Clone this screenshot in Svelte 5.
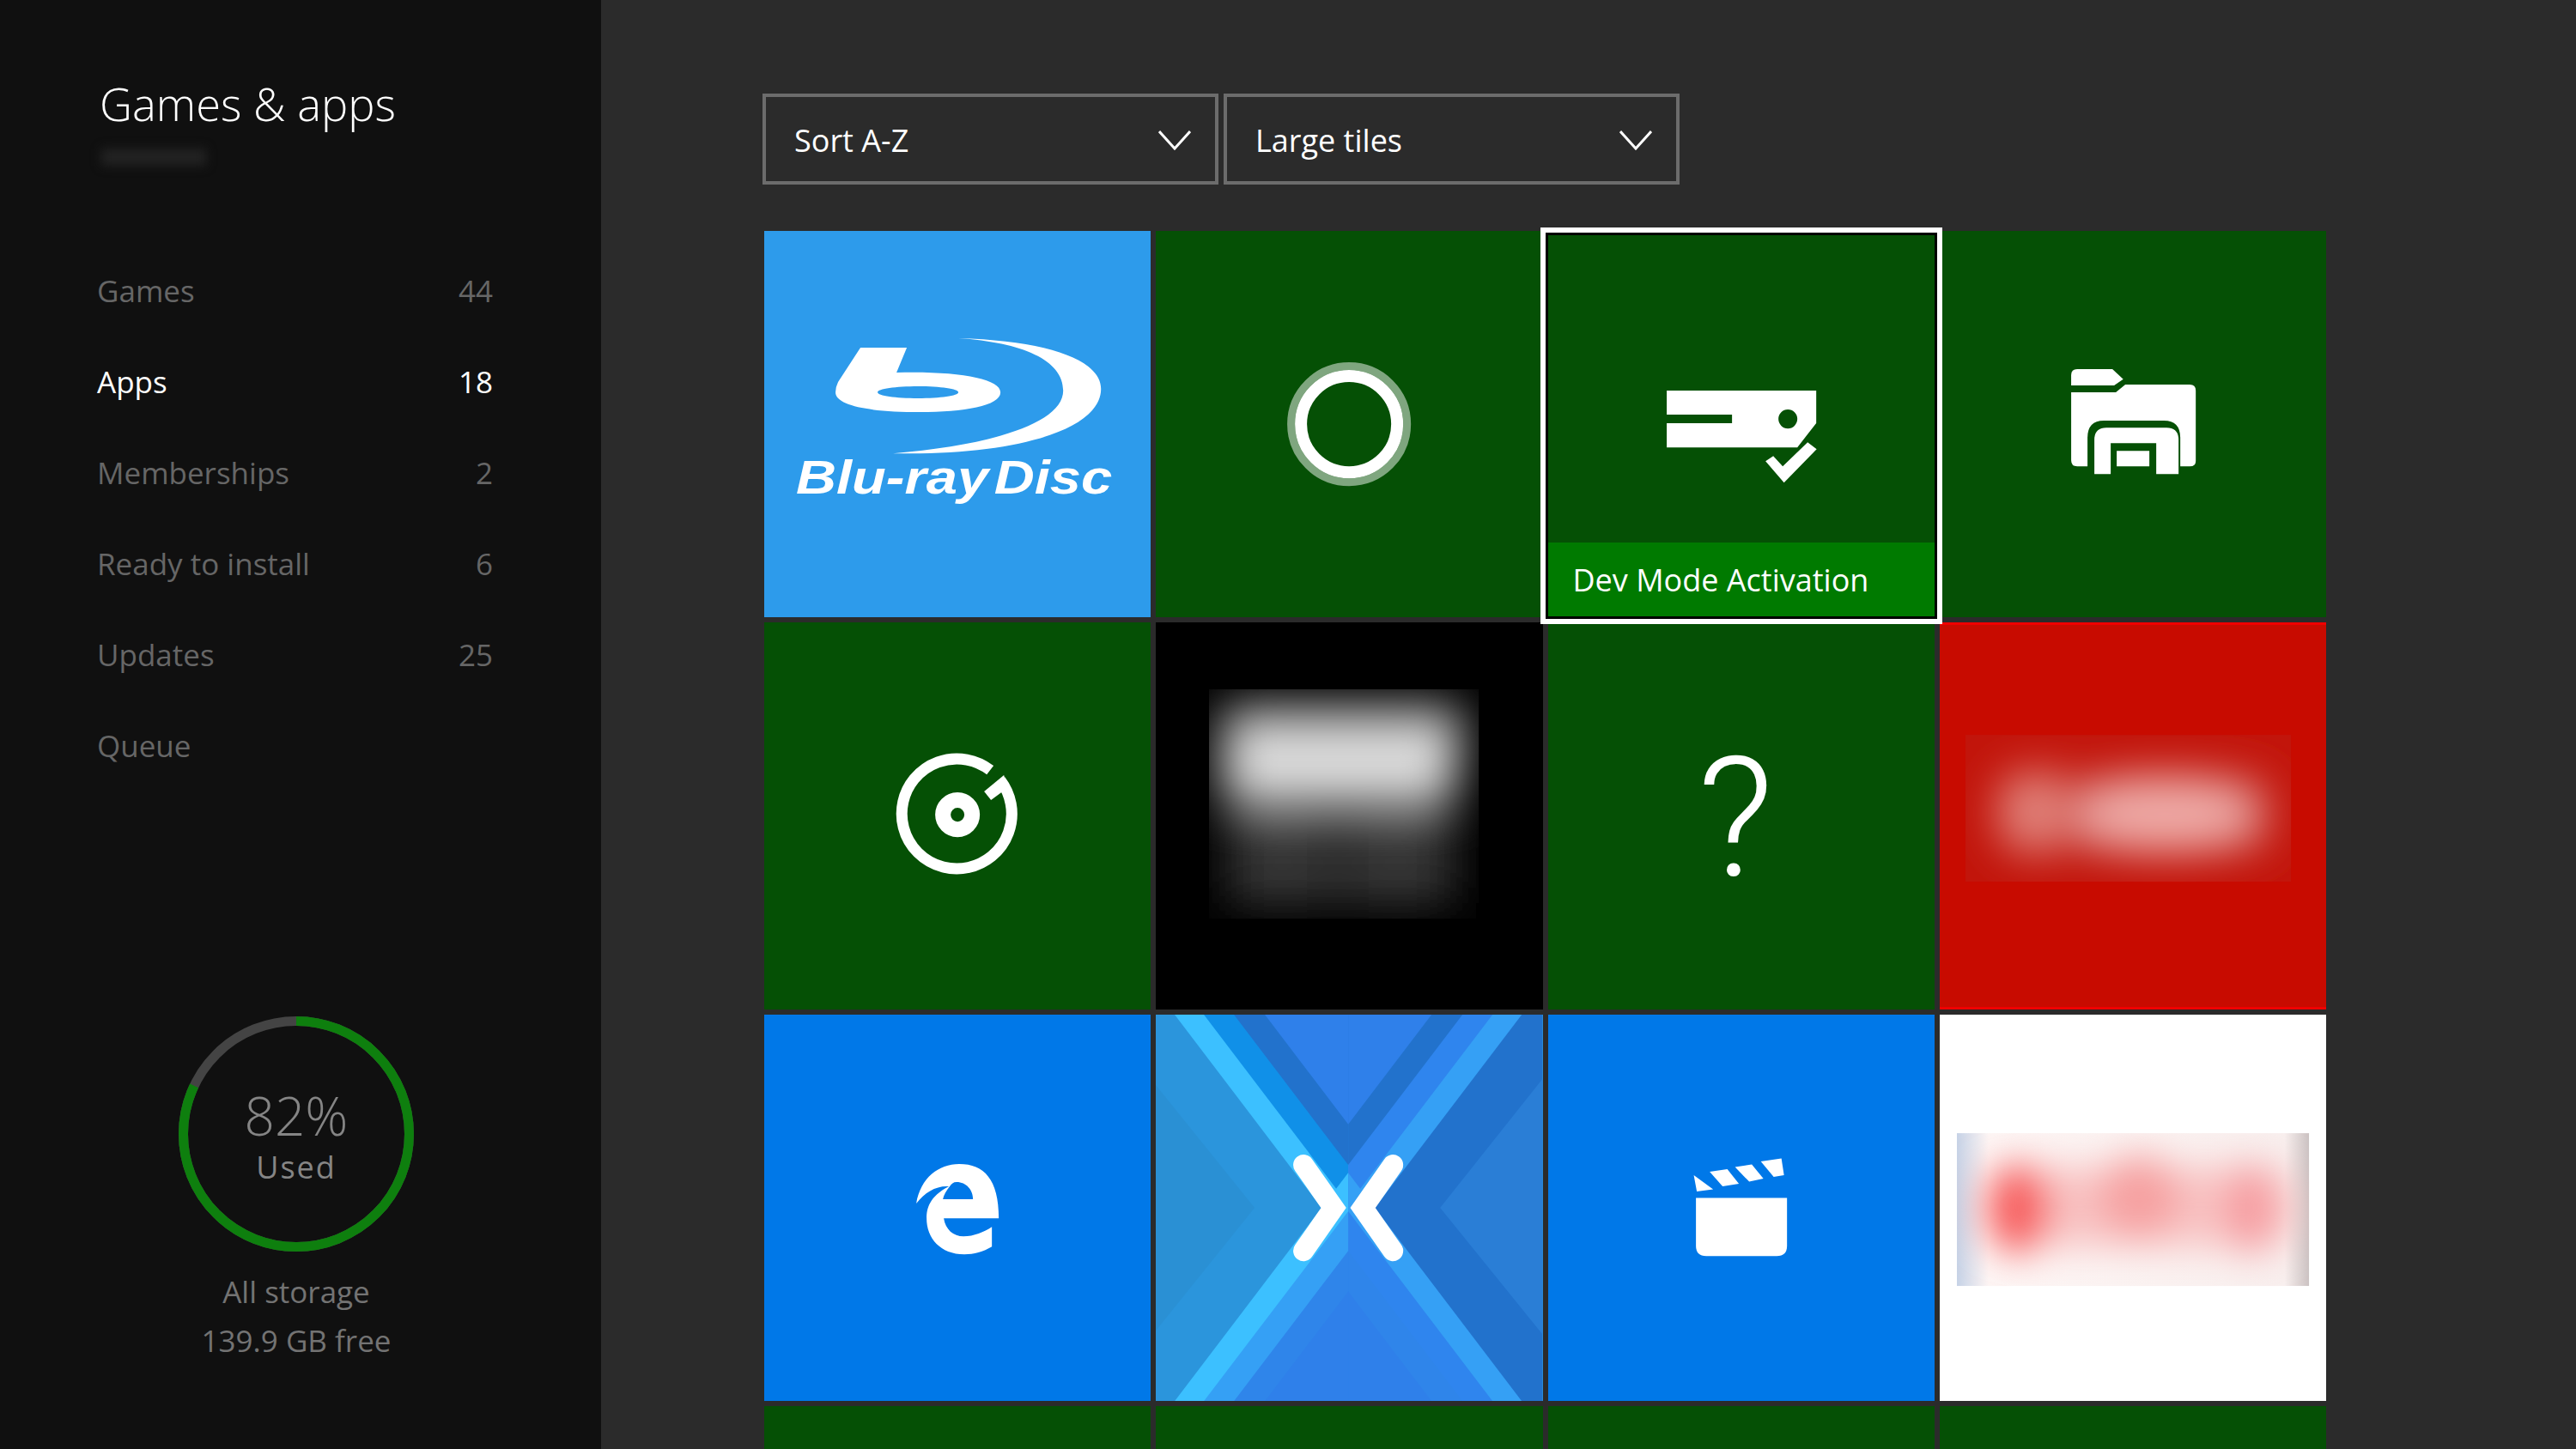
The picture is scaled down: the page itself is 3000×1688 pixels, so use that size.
<script lang="ts">
	const nav = [
		{ label: 'Games', count: 44 },
		{ label: 'Apps', count: 18, active: true },
		{ label: 'Memberships', count: 2 },
		{ label: 'Ready to install', count: 6 },
		{ label: 'Updates', count: 25 },
		{ label: 'Queue' }
	];

	// ring: 82% used, starting at 12 o'clock
	const r = 131.5;
	const circ = 2 * Math.PI * r;

	// nested V shapes of the Xamarin tile, outermost first
	const vShapes = [
		{ a: 22, l: '#3cc0ff', r: '#35a0f5', tl: '#3cc0ff', tr: '#35a0f5' },
		{ a: 56, l: '#1090e8', r: '#2f85ee', tl: '#35a0f5', tr: '#2f85ee' },
		{ a: 91, l: '#2272cc', r: '#2272cc', tl: '#2f85ea', tr: '#2f85ea' },
		{ a: 127, l: '#2f80ea', r: '#2f80ea', tl: '#2f80ea', tr: '#2f80ea' }
	];
	const apex = (a: number) => (224 - a) / 0.76;
</script>

<div class="screen">
	<aside class="side">
		<h1 class="title">Games &amp; apps</h1>
		<div class="gamertag"></div>

		<ul class="nav">
			{#each nav as item}
				<li class="nav-row" class:active={item.active}>
					<span>{item.label}</span>
					{#if item.count}<span>{item.count}</span>{/if}
				</li>
			{/each}
		</ul>

		<div class="storage">
			<div class="ring">
				<svg viewBox="0 0 274 274" width="274" height="274">
					<circle cx="137" cy="137" r={r} fill="none" stroke="#444444" stroke-width="11" />
					<circle
						cx="137"
						cy="137"
						r={r}
						fill="none"
						stroke="#0e7f0e"
						stroke-width="11"
						stroke-dasharray="{circ * 0.82} {circ}"
						transform="rotate(-90 137 137)"
					/>
				</svg>
				<div class="ring-text">
					<div class="pct">82%</div>
					<div class="used">Used</div>
				</div>
			</div>
			<div class="storage-text">All storage</div>
			<div class="storage-text">139.9 GB free</div>
		</div>
	</aside>

	<main class="main">
		<div class="filters">
			<div class="select">
				<span>Sort A-Z</span>
				<svg viewBox="0 0 38 24" width="38" height="24"><path d="M1 2 19 22 37 2" fill="none" stroke="#fff" stroke-width="3" /></svg>
			</div>
			<div class="select">
				<span>Large tiles</span>
				<svg viewBox="0 0 38 24" width="38" height="24"><path d="M1 2 19 22 37 2" fill="none" stroke="#fff" stroke-width="3" /></svg>
			</div>
		</div>

		<div class="grid">
			<!-- blu-ray -->
			<div class="tile bluray">
				<svg viewBox="0 0 450 450" class="art">
					<path fill="#fff" fill-rule="evenodd" d="M112 136H166L154 165C225 163 275 172 275 188C275 204 232 211 181 211C125 211 83 204 83 188Q83 182 86 176ZM179 181C153 181 132 184 132 188C132 192 153 195 179 195C205 195 226 192 226 188C226 184 205 181 179 181Z" />
					<path fill="#fff" d="M226 125C330 128 392 150 392 184C392 232 290 262 150 259C260 250 348 225 348 186C348 150 300 130 226 125Z" />
					<text x="37" y="306" class="bd-text" textLength="368" lengthAdjust="spacingAndGlyphs">Blu-ray Disc</text>
				</svg>
			</div>

			<!-- ring -->
			<div class="tile green">
				<svg viewBox="0 0 450 450" class="art">
					<circle cx="225" cy="225" r="67.5" fill="none" stroke="#7fa67f" stroke-width="9" />
					<circle cx="225" cy="225" r="56" fill="none" stroke="#fff" stroke-width="14" />
				</svg>
			</div>

			<!-- focused tile -->
			<div class="tile green focused">
				<svg viewBox="0 0 450 450" class="art">
					<path fill="#fff" fill-rule="evenodd" d="M138 186H312V224L290 252H138V224H214V214H138ZM279 208A11 11 0 1 0 279 230A11 11 0 1 0 279 208Z" />
					<path fill="#fff" d="M253 268 262 262 273 274 302 246 312.500 254 274.500 293Z" />
				</svg>
				<div class="tile-label">Dev Mode Activation</div>
				<div class="focus-ring"></div>
			</div>

			<!-- file explorer -->
			<div class="tile green">
				<svg viewBox="0 0 450 450" class="art">
					<path fill="#fff" d="M153 168Q153 161 160 161H201L213.600 172.700 203 180H153Z" />
					<path fill="#fff" d="M153 188H205L216 179H291Q298 179 298 186V268Q298 274 291 274H280V241Q280 221 261 221H191Q172 221 172 241V274H160Q153 274 153 267Z" />
					<path fill="#fff" fill-rule="evenodd" d="M180 283V243Q180 229 194 229H264Q278 229 278 243V283H252V247H199V283ZM206 256V274H244V256Z" />
				</svg>
			</div>

			<!-- groove -->
			<div class="tile green">
				<svg viewBox="0 0 450 450" class="art">
					<path d="M263 172A64 64 0 1 0 275 184" fill="none" stroke="#fff" stroke-width="13" />
					<path fill="#fff" d="M279 178 256 197 264 207 283 193Z" />
					<circle cx="225" cy="224" r="17" fill="none" stroke="#fff" stroke-width="18" />
				</svg>
			</div>

			<!-- redacted black tile -->
			<div class="tile black">
				<svg viewBox="0 0 450 450" class="art">
					<defs>
						<filter id="blur-a" x="-40%" y="-40%" width="180%" height="180%"><feGaussianBlur stdDeviation="27" /></filter>
						<clipPath id="clip-a"><rect x="62" y="78" width="314" height="267" /></clipPath>
					</defs>
					<g clip-path="url(#clip-a)">
						<g filter="url(#blur-a)">
							<rect x="76" y="84" width="285" height="60" fill="#3c3c3c" />
							<rect x="78" y="118" width="272" height="96" rx="20" fill="#dcdcdc" />
							<rect x="84" y="235" width="124" height="92" fill="#383838" />
							<rect x="216" y="235" width="130" height="92" fill="#383838" />
						</g>
					</g>
				</svg>
			</div>

			<!-- placeholder tile -->
			<div class="tile green">
				<svg viewBox="0 0 450 450" class="art">
					<text x="218" y="295" class="qmark" text-anchor="middle">?</text>
				</svg>
			</div>

			<!-- redacted red tile -->
			<div class="tile red">
				<svg viewBox="0 0 450 450" class="art">
					<defs>
						<filter id="blur-b" x="-40%" y="-40%" width="180%" height="180%"><feGaussianBlur stdDeviation="24" /></filter>
						<clipPath id="clip-b"><rect x="30" y="131" width="379" height="171" /></clipPath>
					</defs>
					<g clip-path="url(#clip-b)">
						<rect x="30" y="131" width="379" height="171" fill="#c2150b" />
						<g filter="url(#blur-b)">
							<rect x="66" y="172" width="326" height="100" rx="30" fill="#cc3b30" />
							<ellipse cx="108" cy="220" rx="40" ry="46" fill="#e08078" />
							<ellipse cx="262" cy="224" rx="104" ry="42" fill="#eea8a4" />
						</g>
					</g>
				</svg>
			</div>

			<!-- edge -->
			<div class="tile blue">
				<svg viewBox="0 0 450 450" class="art">
					<path fill="#fff" fill-rule="evenodd" d="M177 220C182 190 203 174 227 174C256 174 273 192 273 237H209C211 250 220 258 232 258C244 258 256 253 265 247V270C255 276 244 279 233 279C205 279 189 260 189 237C189 226 192 212 215 200C200 199 187 207 177 220ZM208 215H243C243 204 235 195 224 195C220 195 218 197 216 200C212 205 209 210 208 215Z" />
				</svg>
			</div>

			<!-- xamarin -->
			<div class="tile xamarin">
				<svg viewBox="0 0 450 450" class="art">
					<rect width="224" height="450" fill="#2b95dc" />
					<rect x="224" width="226" height="450" fill="#2272cc" />
					<polygon points="0,82 115,225 0,368" fill="#2a90d4" />
					<polygon points="450,75 331,225 450,372" fill="#2a7ed6" />
					{#each vShapes as v}
						<polygon points="{v.a},0 224,0 224,{apex(v.a)}" fill={v.l} />
						<polygon points="{448 - v.a},0 224,0 224,{apex(v.a)}" fill={v.r} />
					{/each}
					{#each vShapes as v}
						<polygon points="{v.a},450 224,450 224,{450 - apex(v.a)}" fill={v.tl} />
						<polygon points="{448 - v.a},450 224,450 224,{450 - apex(v.a)}" fill={v.tr} />
					{/each}
					<path d="M172 175 207 225 172 275" fill="none" stroke="#fff" stroke-width="24" stroke-linecap="round" />
					<path d="M276 175 241 225 276 275" fill="none" stroke="#fff" stroke-width="24" stroke-linecap="round" />
				</svg>
			</div>

			<!-- movies -->
			<div class="tile blue">
				<svg viewBox="0 0 450 450" class="art">
					<polygon fill="#fff" points="169.500,187 192,203.500 173,206" />
					<polygon fill="#fff" points="188,183 208.500,180 222,197 203,200" />
					<polygon fill="#fff" points="217.500,177.500 237,174.500 250.500,191 234,194.500" />
					<polygon fill="#fff" points="247.500,171 271.500,167.500 274.500,187 262.500,189" />
					<path fill="#fff" d="M172 213.500H278V269Q278 281 266 281H184Q172 281 172 269Z" />
				</svg>
			</div>

			<!-- redacted white tile -->
			<div class="tile white">
				<svg viewBox="0 0 450 450" class="art">
					<defs>
						<linearGradient id="edge-c" x1="0" x2="1">
							<stop offset="0" stop-color="#c6d2e6" />
							<stop offset="0.09" stop-color="#fdf6f5" />
							<stop offset="0.93" stop-color="#f8efee" />
							<stop offset="1" stop-color="#cbc2c2" />
						</linearGradient>
						<filter id="blur-c" x="-40%" y="-40%" width="180%" height="180%"><feGaussianBlur stdDeviation="22" /></filter>
						<clipPath id="clip-c"><rect x="20" y="138" width="410" height="178" /></clipPath>
					</defs>
					<g clip-path="url(#clip-c)">
						<rect x="20" y="138" width="410" height="178" fill="url(#edge-c)" />
						<g filter="url(#blur-c)">
							<rect x="50" y="178" width="360" height="92" rx="30" fill="#f8c2c2" />
							<ellipse cx="91" cy="226" rx="36" ry="52" fill="#f75a5a" />
							<ellipse cx="232" cy="212" rx="46" ry="48" fill="#f6a0a0" />
							<ellipse cx="362" cy="226" rx="30" ry="52" fill="#f69ca0" />
						</g>
					</g>
				</svg>
			</div>

			<div class="tile green"></div>
			<div class="tile green"></div>
			<div class="tile green"></div>
			<div class="tile green"></div>
		</div>
	</main>
</div>

<style>
	:global(body) {
		margin: 0;
		background: #2b2b2b;
	}

	.screen {
		display: flex;
		width: 3000px;
		height: 1688px;
		overflow: hidden;
		font-family: 'Open Sans', 'Noto Sans', sans-serif;
		color: #fff;
	}

	.side {
		display: flex;
		flex-direction: column;
		flex: none;
		width: 700px;
		box-sizing: border-box;
		background: #101010;
	}

	.title {
		margin: 85px 0 0 116px;
		font-size: 52.5px;
		line-height: 72px;
		font-weight: 300;
	}

	.gamertag {
		width: 122px;
		height: 20px;
		margin: 16px 0 0 118px;
		background: #222;
		filter: blur(6px);
	}

	.nav {
		list-style: none;
		margin: 0;
		padding: 0 126px 0 113px;
		margin-top: 92px;
	}

	.nav-row {
		display: flex;
		justify-content: space-between;
		align-items: center;
		height: 106px;
		font-size: 35px;
		color: #666;
	}

	.nav-row.active {
		color: #fff;
	}

	.storage {
		display: flex;
		flex-direction: column;
		align-items: center;
		margin-top: auto;
		padding: 0 10px 98px 0;
	}

	.ring {
		display: grid;
		margin-bottom: 18px;
	}

	.ring svg {
		display: block;
		grid-area: 1 / 1;
	}

	.ring-text {
		grid-area: 1 / 1;
		align-self: center;
		text-align: center;
		color: #858585;
	}

	.pct {
		font-size: 62px;
		line-height: 78px;
		font-weight: 300;
	}

	.used {
		font-size: 36px;
		line-height: 44px;
		letter-spacing: 2px;
	}

	.storage-text {
		font-size: 35px;
		line-height: 57px;
		color: #737373;
	}

	.main {
		flex: 1;
		padding: 109px 0 0 188px;
		background: #2b2b2b;
	}

	.filters {
		display: flex;
		gap: 6px;
	}

	.select {
		display: flex;
		justify-content: space-between;
		align-items: center;
		box-sizing: border-box;
		width: 531px;
		height: 106px;
		padding: 2px 28px 0 33px;
		border: 4px solid #6c6c6c;
		font-size: 36px;
	}

	.grid {
		display: grid;
		grid-template-columns: repeat(4, 450.25px);
		grid-auto-rows: 450.25px;
		gap: 6px;
		margin: 54px 0 0 2px;
	}

	.tile {
		position: relative;
		min-width: 0;
	}

	.art {
		display: block;
		width: 100%;
		height: 100%;
	}

	.green {
		background: #055005;
	}

	.blue {
		background: #0078e8;
	}

	.bluray {
		background: #2d9beb;
	}

	.black {
		background: #000;
	}

	.red {
		background: #c80b00;
		box-shadow: inset 0 3px 0 #f00000, inset 0 -3px 0 #f00000;
	}

	.white {
		background: #fff;
	}

	.xamarin {
		background: #2b95dc;
	}

	.bd-text {
		font-family: 'Liberation Sans', sans-serif;
		font-size: 56px;
		font-weight: 700;
		font-style: italic;
		word-spacing: -10px;
		fill: #fff;
	}

	.qmark {
		font-family: Roboto, sans-serif;
		font-weight: 300;
		font-size: 195px;
		fill: #fff;
	}

	.tile-label {
		position: absolute;
		left: 0;
		right: 0;
		bottom: 0;
		height: 87px;
		padding-left: 29px;
		line-height: 87px;
		background: #007a00;
		font-size: 36px;
	}

	/* white frame with a thin black line inside, sits over the neighbours */
	.focus-ring {
		position: absolute;
		left: -9px;
		right: -9px;
		top: -4px;
		bottom: -8px;
		border: 6px solid #fff;
		outline: 3px solid #000;
		outline-offset: -9px;
		z-index: 2;
	}
</style>
